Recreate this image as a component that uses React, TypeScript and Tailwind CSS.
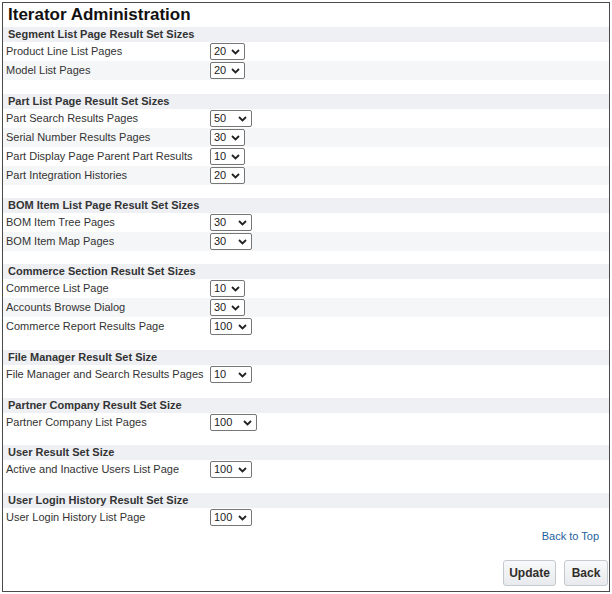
import React from "react";

type Row = { label: string; value: string; w: number };
type Section = { title: string; rows: Row[]; gap: number };

const sections: Section[] = [
  {
    title: "Segment List Page Result Set Sizes",
    gap: 0,
    rows: [
      { label: "Product Line List Pages", value: "20", w: 35 },
      { label: "Model List Pages", value: "20", w: 35 },
    ],
  },
  {
    title: "Part List Page Result Set Sizes",
    gap: 14,
    rows: [
      { label: "Part Search Results Pages", value: "50", w: 42 },
      { label: "Serial Number Results Pages", value: "30", w: 35 },
      { label: "Part Display Page Parent Part Results", value: "10", w: 35 },
      { label: "Part Integration Histories", value: "20", w: 35 },
    ],
  },
  {
    title: "BOM Item List Page Result Set Sizes",
    gap: 13,
    rows: [
      { label: "BOM Item Tree Pages", value: "30", w: 42 },
      { label: "BOM Item Map Pages", value: "30", w: 42 },
    ],
  },
  {
    title: "Commerce Section Result Set Sizes",
    gap: 13,
    rows: [
      { label: "Commerce List Page", value: "10", w: 35 },
      { label: "Accounts Browse Dialog", value: "30", w: 35 },
      { label: "Commerce Report Results Page", value: "100", w: 42 },
    ],
  },
  {
    title: "File Manager Result Set Size",
    gap: 14,
    rows: [{ label: "File Manager and Search Results Pages", value: "10", w: 42 }],
  },
  {
    title: "Partner Company Result Set Size",
    gap: 14,
    rows: [{ label: "Partner Company List Pages", value: "100", w: 47 }],
  },
  {
    title: "User Result Set Size",
    gap: 13,
    rows: [{ label: "Active and Inactive Users List Page", value: "100", w: 42 }],
  },
  {
    title: "User Login History Result Set Size",
    gap: 14,
    rows: [{ label: "User Login History List Page", value: "100", w: 42 }],
  },
];

function Chevron() {
  return (
    <svg width="9" height="6" viewBox="0 0 9 6" className="shrink-0">
      <polyline points="1,1 4.5,4.5 8,1" fill="none" stroke="#222" strokeWidth="1.8" />
    </svg>
  );
}

function FakeSelect({ value, w }: { value: string; w: number }) {
  return (
    <div
      className="flex h-[17px] items-center justify-between rounded-[2px] border border-[#767676] bg-white pl-[3px] pr-[4px] text-[11px] leading-[15px] text-[#222]"
      style={{ width: w }}
    >
      <span>{value}</span>
      <Chevron />
    </div>
  );
}

export default function App() {
  return (
    <div
      className="m-[2px] flex h-[590px] w-[608px] flex-col border border-[#4a4a4a] bg-white text-[#333]"
      style={{ fontFamily: '"Liberation Sans", Arial, sans-serif' }}
    >
      <div className="h-[24px] pl-[5px] pt-[2px] text-[17px] font-bold leading-[20px] text-[#111]">
        Iterator Administration
      </div>
      {sections.map((s) => (
        <div key={s.title} className="flex flex-col" style={{ marginTop: s.gap }}>
          <div className="h-[15px] bg-[#eef0f3] pl-[5px] text-[11px] font-bold leading-[15px] text-[#333]">
            {s.title}
          </div>
          {s.rows.map((r, i) => (
            <div
              key={r.label}
              className={`grid h-[19px] grid-cols-[204px_1fr] items-center pl-[3px] ${
                i % 2 === 1 ? "bg-[#f5f6f8]" : "bg-white"
              }`}
            >
              <span className="text-[11px] leading-[13px] text-[#333]">{r.label}</span>
              <FakeSelect value={r.value} w={r.w} />
            </div>
          ))}
        </div>
      ))}
      <div className="mt-[3px] flex justify-end pr-[10px]">
        <a className="text-[11px] leading-[13px] text-[#1f5f9e]">Back to Top</a>
      </div>
      <div className="mt-[17px] flex justify-end gap-[8px] pr-[1px]">
        <button className="h-[26px] w-[53px] rounded-[3px] border border-[#c4c9cf] bg-gradient-to-b from-[#f8f9fa] to-[#e8eaed] text-[12px] font-bold text-[#312d2a]">
          Update
        </button>
        <button className="h-[26px] w-[44px] rounded-[3px] border border-[#c4c9cf] bg-gradient-to-b from-[#f8f9fa] to-[#e8eaed] text-[12px] font-bold text-[#312d2a]">
          Back
        </button>
      </div>
    </div>
  );
}
